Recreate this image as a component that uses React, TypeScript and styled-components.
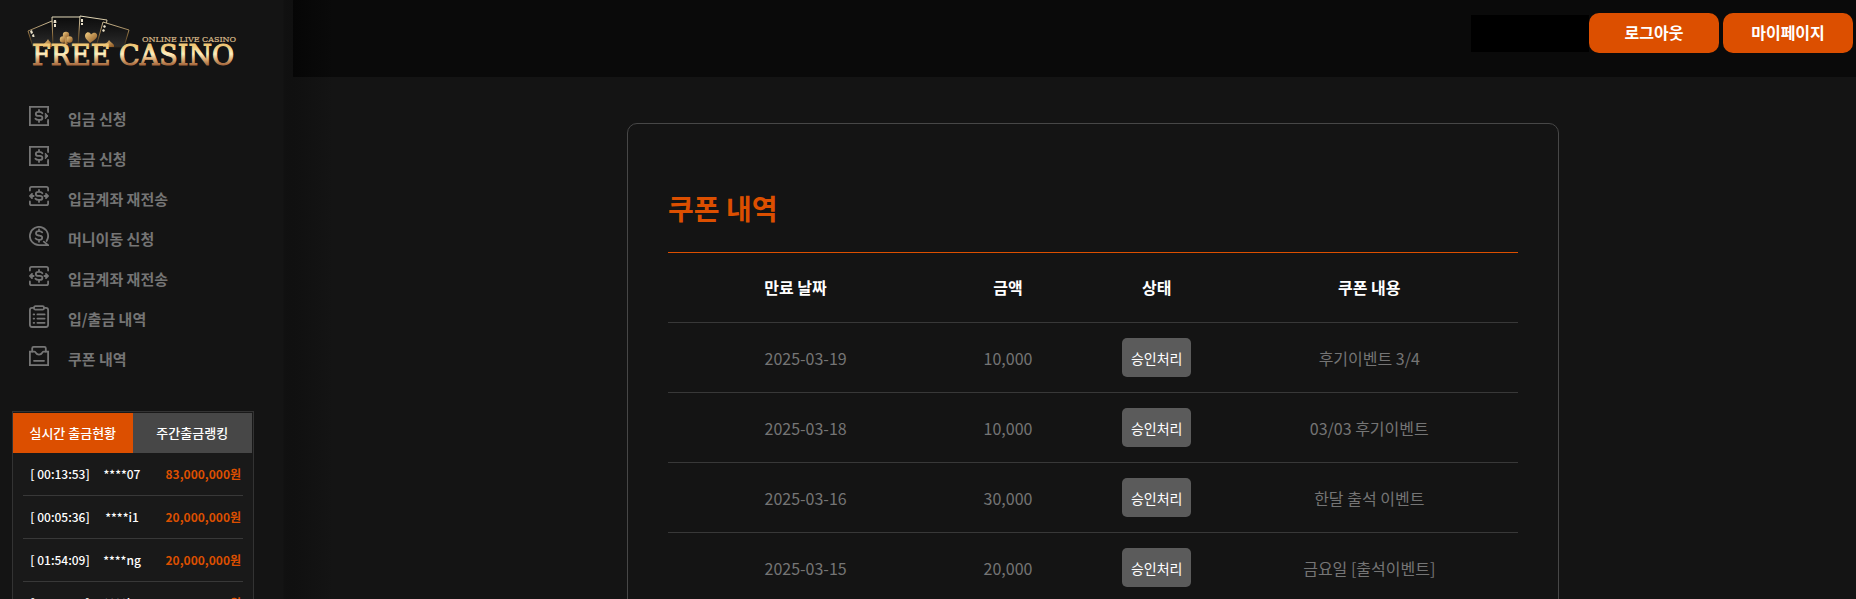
import React from 'react';
import styled, { createGlobalStyle } from 'styled-components';

const ORANGE = '#dc4f00';

const GlobalStyle = createGlobalStyle`
  *, *::before, *::after { box-sizing: border-box; }
  html { scrollbar-width: none; }
  body {
    margin: 0;
    background: #141414;
    color: #fff;
    font-family: "Noto Sans CJK KR", "Noto Sans", sans-serif;
    font-size: 16px;
  }
  button { font-family: inherit; border: 0; padding: 0; cursor: pointer; }
  a { color: inherit; text-decoration: none; }
  ul { list-style: none; margin: 0; padding: 0; }
`;

const Shell = styled.div`
  display: grid;
  grid-template-columns: 293px minmax(0, 1fr);
  min-height: 100vh;
`;

const Sidebar = styled.aside`
  padding: 0 39px 40px 12px;
  background: linear-gradient(to right, #141414 283px, #111 284px, #101010);
`;

const LogoLink = styled.a`
  display: block;
  padding: 10px 0 0 10px;
  svg { display: block; }
`;

const NavList = styled.ul`
  padding: 26px 0 0 17px;
`;

const NavLink = styled.a`
  display: flex;
  align-items: center;
  gap: 19px;
  height: 40px;
  color: #757575;
  font-weight: 700;
  font-size: 15px;
  svg { flex: none; margin-bottom: 4px; }
`;

const Ticker = styled.section`
  margin-top: 33px;
  padding: 1px 1px 0 0;
  border: 1px solid #333;
  background: #191919;
`;

const TabBar = styled.div`
  display: flex;
`;

const Tab = styled.button<{ $active?: boolean }>`
  flex: 1;
  height: 40px;
  padding-bottom: 2px;
  background: ${(p) => (p.$active ? ORANGE : '#474747')};
  color: #fff;
  font-size: 13px;
  font-weight: 500;
`;

const TickerList = styled.ul`
  padding: 0 9px 0 10px;
`;

const TickerRow = styled.li`
  display: grid;
  grid-template-columns: 74px 50px 1fr;
  align-items: center;
  height: 43px;
  padding-bottom: 2px;
  border-bottom: 1px solid #383838;
  font-size: 12px;
  font-weight: 500;
  text-align: center;
`;

const Payout = styled.strong`
  color: ${ORANGE};
  font-weight: 700;
  text-align: right;
  padding-right: 2px;
`;

const Content = styled.div`
  min-width: 0;
`;

const TopBar = styled.header`
  display: flex;
  justify-content: flex-end;
  align-items: flex-start;
  height: 77px;
  padding: 13px 3px 0 0;
  background: linear-gradient(to right, #060606, #0a0a0a 40px);
`;

const AccountBox = styled.div`
  width: 118px;
  height: 37px;
  margin-top: 2px;
  background: #000;
`;

const TopButton = styled.button`
  width: 130px;
  height: 40px;
  padding-bottom: 2px;
  border-radius: 10px;
  background: ${ORANGE};
  color: #fff;
  font-size: 16px;
  font-weight: 700;
  & + & { margin-left: 4px; }
`;

const Main = styled.main`
  padding: 46px 0 40px 37px;
  background: linear-gradient(to right, #101010, #141414 40px);
`;

const Card = styled.section`
  max-width: 932px;
  margin: 0 auto;
  padding: 60px 40px;
  border: 1px solid #474747;
  border-radius: 10px;
`;

const Title = styled.h1`
  margin: 0;
  height: 68px;
  line-height: 48px;
  color: ${ORANGE};
  font-size: 28px;
  font-weight: 700;
`;

const CouponTable = styled.table`
  width: 100%;
  table-layout: fixed;
  border-collapse: separate;
  border-spacing: 0;
  text-align: center;
  border-top: 1px solid ${ORANGE};

  th, td {
    height: 70px;
    padding: 0;
    border-bottom: 1px solid #383838;
  }
  td { color: #757575; }
  thead th { padding-bottom: 2px; color: #fff; font-weight: 700; }
`;

const Col = styled.col<{ $share: number }>`
  width: ${(p) => p.$share}%;
`;

const DateText = styled.span`
  display: block;
  width: 62px;
  margin: 0 auto;
  text-align: left;
  white-space: nowrap;
`;

const StatusButton = styled.button`
  width: 69px;
  height: 39px;
  border-radius: 5px;
  background: #5b5b5b;
  color: #fff;
  font-size: 14px;
  vertical-align: middle;
`;

type IconName = 'request' | 'transfer' | 'search' | 'list' | 'box';

const Dollar = () => (
  <path d="M14.4 8.2C13.8 7.3 12.8 6.900 11.400 6.900H10.400C8.800 6.900 7.800 7.500 7.800 8.900S8.800 10.900 10.400 10.900H11.800C13.400 10.900 14.400 11.600 14.400 12.900S13.400 14.900 11.800 14.900H10.600C9.200 14.900 8.100 14.500 7.400 13.600M11 4.900V6.900M11 14.900V16.900" />
);

const shapes: Record<IconName, React.ReactNode> = {
  request: (
    <>
      <path d="M20.1 6V1.900H1.900V20.100H20.100V16" strokeLinecap="butt" />
      <Dollar />
      <path d="M17.600 8.400L20 11L17.600 13.600Z" fill="currentColor" strokeWidth="1" />
      <path d="M20.100 7V5M20.100 17V15" />
    </>
  ),
  transfer: (
    <>
      <path d="M1.900 5.500V3.600Q1.900 1.900 3.600 1.900H18.400Q20.100 1.900 20.100 3.600V5.500M1.900 16.500V18.400Q1.900 20.100 3.600 20.100H18.400Q20.100 20.100 20.100 18.400V16.500" />
      <Dollar />
      <path d="M5.600 11H2M4 9L2 11L4 13M16.400 11H20M18 9L20 11L18 13" />
    </>
  ),
  search: (
    <>
      <path d="M18.600 16A9.100 9.100 0 1 0 11 20.100H20L15.800 16.600" />
      <path d="M14.200 7.400C13.500 6.600 12.500 6.200 11.200 6.200H10.600C9 6.200 8 7 8 8.200S9 10.300 10.600 10.500L11.600 10.700C13.200 10.900 14.200 11.600 14.200 12.800S13.200 14.900 11.600 14.900H10.800C9.400 14.900 8.300 14.400 7.600 13.500M11 4.400V6M11 15V16.800" />
    </>
  ),
  list: (
    <>
      <path d="M6 1.800H4Q1.900 1.800 1.900 4V18.800Q1.900 21 4 21H18Q20.100 21 20.100 18.800V4Q20.100 1.800 18 1.800H16" />
      <rect x="6" y="0.200" width="10" height="3.400" rx="1.400" />
      <path d="M5.600 8.400H6.200M9.400 8.400H16.600M5.600 12.600H6.200M9.400 12.600H16.600M5.600 16.800H6.200M9.400 16.800H16.600" />
    </>
  ),
  box: (
    <>
      <path d="M4.200 6.600V3.200Q4.200 1.900 5.600 1.900H16.400Q17.800 1.900 17.800 3.200V6.600" />
      <path d="M1.900 6.600H6.400Q7.400 6.600 8 8Q8.800 9.600 11 9.600T14 8Q14.600 6.600 15.600 6.600H20.100V20.100H1.900Z" />
      <path d="M6 15.800H16" />
    </>
  ),
};

const Icon = ({ name }: { name: IconName }) => (
  <svg
    width="20"
    height={name === 'list' ? 23 : 20}
    viewBox={name === 'list' ? '1 -1 20 23' : '1 1 20 20'}
    fill="none"
    stroke="currentColor"
    strokeWidth="1.8"
    strokeLinecap="round"
    aria-hidden="true"
  >
    {shapes[name]}
  </svg>
);

const cards = [
  '28,31 52,21 58,47 33,47',
  '52,17 81,17 79,47 53,47',
  '80,16 107,20 102,47 78,47',
  '103,22 129,30 124,47 96,47',
];

const Logo = () => (
  <svg width="232" height="62" viewBox="22 10 232 62" role="img" aria-label="Free Casino">
    <defs>
      <linearGradient id="gold" gradientUnits="userSpaceOnUse" x1="0" y1="46" x2="0" y2="66">
        <stop offset="0" stopColor="#f0c878" />
        <stop offset="0.4" stopColor="#fff0c0" />
        <stop offset="0.65" stopColor="#e0b078" />
        <stop offset="1" stopColor="#9c5c34" />
      </linearGradient>
      <linearGradient id="suit" x1="0" y1="0" x2="1" y2="1">
        <stop offset="0" stopColor="#f3cf83" />
        <stop offset="1" stopColor="#87511f" />
      </linearGradient>
      <linearGradient id="face" x1="0" y1="0" x2="0" y2="1">
        <stop offset="0" stopColor="#0c0c0c" />
        <stop offset="1" stopColor="#2c2c2c" />
      </linearGradient>
      <linearGradient id="edge" gradientUnits="userSpaceOnUse" x1="0" y1="16" x2="0" y2="47">
        <stop offset="0" stopColor="#e8dfc0" />
        <stop offset="0.6" stopColor="#8a6a3a" />
        <stop offset="1" stopColor="#2c2418" />
      </linearGradient>
    </defs>
    <g fill="url(#face)" stroke="url(#edge)" strokeLinejoin="round">
      {cards.map((points) => (
        <polygon key={points} points={points} />
      ))}
    </g>
    <g fill="url(#suit)">
      <path d="M48 39C49 42 53 43 52 47H43C43 43 47 42 48 39Z" />
      <path d="M109 40C111 43 115 44 114 47H103C103 44 108 43 109 40Z" />
      <circle cx="66" cy="35" r="3.200" />
      <circle cx="63" cy="39.500" r="3.200" />
      <circle cx="69.500" cy="39.500" r="3.200" />
      <path d="M66 37L68 44H64.500Z" />
      <path d="M90 43C86 39 84 37 85.500 34C87 31.500 90 32 91 34.500C93 32 96 32 97 34.500C98 38 94 40 90 43Z" />
    </g>
    <g fill="#e8dfc8">
      <path d="M30 31L32 30L33 33L31 34ZM32 35L34 34L34.500 37H32.500ZM54 20H56L56.500 23H53.500ZM54 24H56V27H54ZM81 19H83V22H81ZM81 23H83V25H81ZM104 25L106 26L105 28L103 27ZM103 29L105 30L104 32L102 31Z" />
    </g>
    <text x="32" y="65" fill="url(#gold)" stroke="url(#gold)" strokeWidth="1" fontFamily="DejaVu Serif, serif" fontSize="27">FREE CASINO</text>
    <text x="142" y="42" fill="#d8b98a" stroke="#d8b98a" strokeWidth="0.200" fontFamily="DejaVu Serif, serif" fontSize="8">ONLINE LIVE CASINO</text>
  </svg>
);

const navItems: { icon: IconName; label: string }[] = [
  { icon: 'request', label: '입금 신청' },
  { icon: 'request', label: '출금 신청' },
  { icon: 'transfer', label: '입금계좌 재전송' },
  { icon: 'search', label: '머니이동 신청' },
  { icon: 'transfer', label: '입금계좌 재전송' },
  { icon: 'list', label: '입/출금 내역' },
  { icon: 'box', label: '쿠폰 내역' },
];

const payouts = [
  { time: '[ 00:13:53]', user: '****07', amount: '83,000,000원' },
  { time: '[ 00:05:36]', user: '****i1', amount: '20,000,000원' },
  { time: '[ 01:54:09]', user: '****ng', amount: '20,000,000원' },
  { time: '[ 02:12:40]', user: '****k2', amount: '15,000,000원' },
];

const coupons = [
  { date: '2025-03-19', amount: '10,000', note: '후기이벤트 3/4' },
  { date: '2025-03-18', amount: '10,000', note: '03/03 후기이벤트' },
  { date: '2025-03-16', amount: '30,000', note: '한달 출석 이벤트' },
  { date: '2025-03-15', amount: '20,000', note: '금요일 [출석이벤트]' },
];

export default function App() {
  return (
    <>
      <GlobalStyle />
      <Shell>
        <Sidebar>
          <LogoLink href="#home">
            <Logo />
          </LogoLink>
          <nav>
            <NavList>
              {navItems.map((item, i) => (
                <li key={i}>
                  <NavLink href="#menu">
                    <Icon name={item.icon} />
                    {item.label}
                  </NavLink>
                </li>
              ))}
            </NavList>
          </nav>
          <Ticker>
            <TabBar>
              <Tab type="button" $active>실시간 출금현황</Tab>
              <Tab type="button">주간출금랭킹</Tab>
            </TabBar>
            <TickerList>
              {payouts.map((p) => (
                <TickerRow key={p.time}>
                  <span>{p.time}</span>
                  <span>{p.user}</span>
                  <Payout>{p.amount}</Payout>
                </TickerRow>
              ))}
            </TickerList>
          </Ticker>
        </Sidebar>
        <Content>
          <TopBar>
            <AccountBox />
            <TopButton type="button">로그아웃</TopButton>
            <TopButton type="button">마이페이지</TopButton>
          </TopBar>
          <Main>
            <Card>
              <Title>쿠폰 내역</Title>
              <CouponTable>
                <colgroup>
                  <Col $share={30} />
                  <Col $share={20} />
                  <Col $share={15} />
                  <Col $share={35} />
                </colgroup>
                <thead>
                  <tr>
                    <th scope="col">만료 날짜</th>
                    <th scope="col">금액</th>
                    <th scope="col">상태</th>
                    <th scope="col">쿠폰 내용</th>
                  </tr>
                </thead>
                <tbody>
                  {coupons.map((c) => (
                    <tr key={c.date}>
                      <td><DateText>{c.date}</DateText></td>
                      <td>{c.amount}</td>
                      <td><StatusButton type="button">승인처리</StatusButton></td>
                      <td>{c.note}</td>
                    </tr>
                  ))}
                </tbody>
              </CouponTable>
            </Card>
          </Main>
        </Content>
      </Shell>
    </>
  );
}
